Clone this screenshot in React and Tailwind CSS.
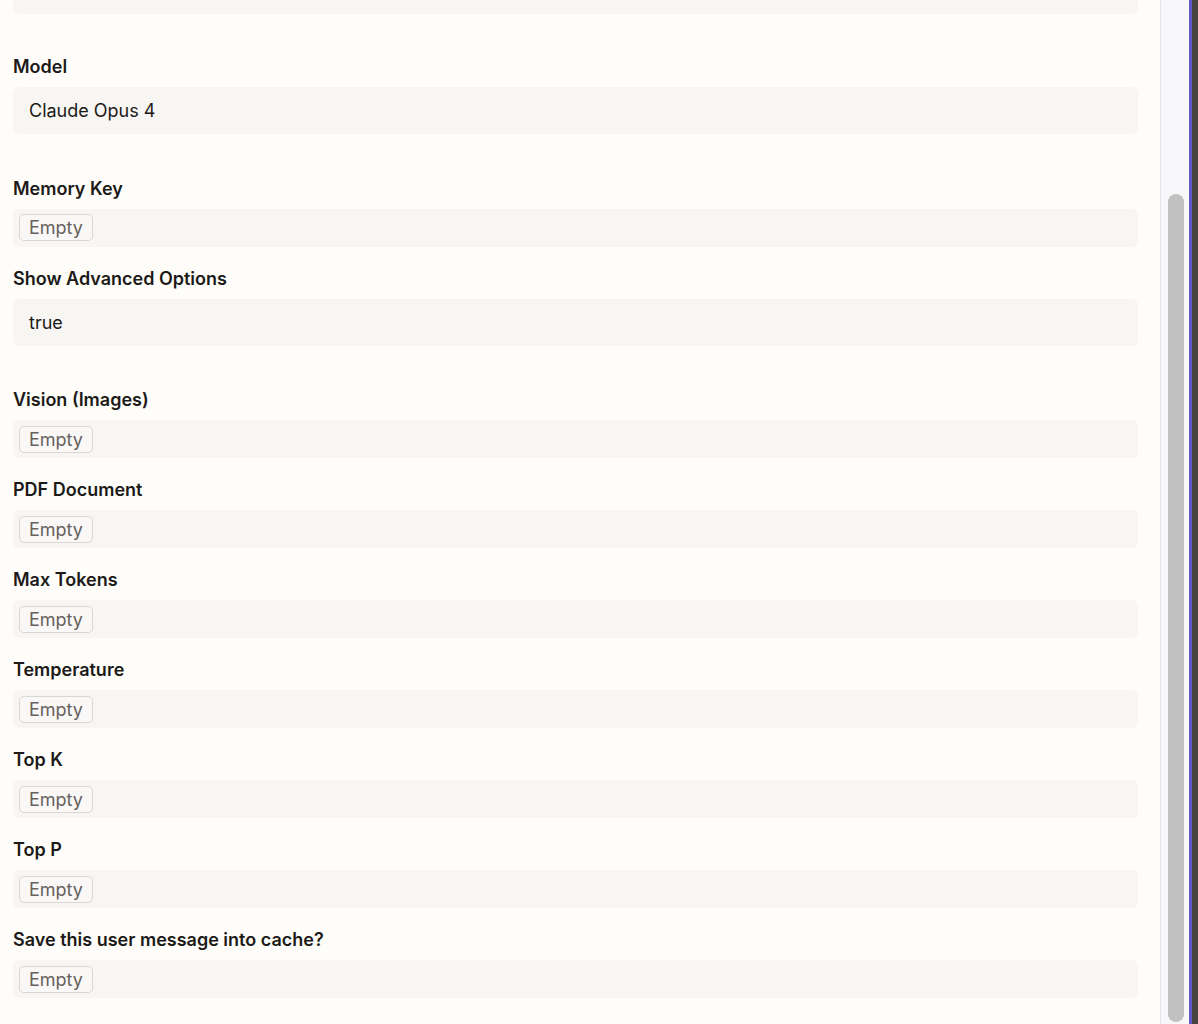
import React from "react";

const fields = [
  { label: "Model", value: "Claude Opus 4" },
  { label: "Memory Key" },
  { label: "Show Advanced Options", value: "true" },
  { label: "Vision (Images)" },
  { label: "PDF Document" },
  { label: "Max Tokens" },
  { label: "Temperature" },
  { label: "Top K" },
  { label: "Top P" },
  { label: "Save this user message into cache?" },
];

function Field({ label, value }) {
  return (
    <div className={value ? "mt-[20px] mb-[22.5px]" : "mt-[20px]"}>
      <div className="h-6 leading-6 text-[18px] font-semibold text-[#1c1a18]">{label}</div>
      <div className="mt-2">
        {value ? (
          <div className="h-[47px] rounded-md bg-[#f7f6f3] pl-4 flex items-center text-[18px] text-[#1c1a18]">
            {value}
          </div>
        ) : (
          <div className="h-[38px] rounded-md bg-[#f7f6f3] px-[6px] flex items-center">
            <span className="h-[27px] px-[9px] flex items-center rounded-[5px] border border-[#d9d7d3] bg-[#f9f8f6] text-[18px] text-[#67625d]">
              Empty
            </span>
          </div>
        )}
      </div>
    </div>
  );
}

export default function App() {
  return (
    <div
      className="flex h-[1024px] w-[1198px] overflow-hidden bg-[#fffdf9]"
      style={{ fontFamily: "Inter, 'Noto Sans', sans-serif" }}
    >
      <div className="w-[1160px] pl-[13px] pr-[22px] flex flex-col">
        <div className="h-[14px] shrink-0 mb-[21px] rounded-b-md bg-[#f7f6f3]" />
        {fields.map((f) => (
          <Field key={f.label} {...f} />
        ))}
      </div>
      <div className="w-[29px] border-l border-[#e6e6ea] bg-[#f8f8fa] pt-[194px] pb-[2px] pl-[7px] pr-[5px] flex flex-col">
        <div className="flex-1 rounded-full bg-[#c1c1c1]" />
      </div>
      <div className="w-[3px] bg-[#6357c8]" />
      <div className="flex-1 bg-[#4a4142]" />
    </div>
  );
}
